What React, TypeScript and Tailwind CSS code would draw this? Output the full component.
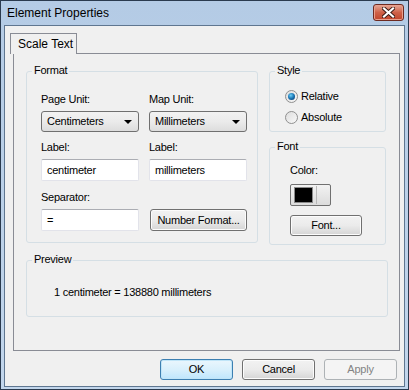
import React from 'react';

const font = "font-['Liberation_Sans',Arial,sans-serif]";

const Group = ({ title, className, children }: { title: string; className: string; children?: React.ReactNode }) => (
  <div className={`relative rounded-[3px] border border-[#d5dfe5] ${className}`}>
    <span className="absolute -top-[8px] left-[5px] bg-[#f0f0f0] px-[2px] leading-[13px]">{title}</span>
    {children}
  </div>
);

const Select = ({ value }: { value: string }) => (
  <div className="flex h-[21px] w-[98px] items-center justify-between rounded-[3px] border border-[#707070] bg-gradient-to-b from-[#f2f2f2] via-[#ebebeb] to-[#dddddd] pl-[5px] pr-[6px]">
    <span>{value}</span>
    <svg width="8" height="4" viewBox="0 0 8 4"><path d="M0 0h8L4 4z" fill="#000" /></svg>
  </div>
);

const TextBox = ({ value }: { value: string }) => (
  <div className="flex h-[22px] w-[98px] items-center rounded-[2px] border border-[#e2e3ea] border-t-[#abadb3] bg-white pl-[5px]">
    {value}
  </div>
);

const Button = ({ label, className = '', variant = 'normal' }: { label: string; className?: string; variant?: 'normal' | 'default' | 'disabled' }) => {
  const look =
    variant === 'default'
      ? 'border-[#3c7fb1] bg-gradient-to-b from-[#eaf6fd] via-[#d9f0fc] to-[#bee6fd] shadow-[inset_0_0_0_1px_#c0e5f8]'
      : variant === 'disabled'
      ? 'border-[#adb2b5] bg-[#f4f4f4] text-[#838383]'
      : 'border-[#707070] bg-gradient-to-b from-[#f2f2f2] via-[#ebebeb] to-[#d5d5d5] shadow-[inset_0_0_0_1px_#fcfcfc]';
  return (
    <div className={`flex items-center justify-center rounded-[3px] border ${look} ${className}`}>{label}</div>
  );
};

const Radio = ({ label, checked }: { label: string; checked?: boolean }) => (
  <div className="flex items-center gap-[3px]">
    <svg width="13" height="13" viewBox="0 0 13 13">
      <defs>
        <radialGradient id="rg" cx="0.4" cy="0.35" r="0.7">
          <stop offset="0" stopColor="#6ccff8" />
          <stop offset="0.6" stopColor="#1c78b6" />
          <stop offset="1" stopColor="#0d4a84" />
        </radialGradient>
        <linearGradient id="rb" x1="0" y1="0" x2="1" y2="1">
          <stop offset="0" stopColor="#dcdcdc" />
          <stop offset="1" stopColor="#fafafa" />
        </linearGradient>
      </defs>
      <circle cx="6.5" cy="6.5" r="6" fill="url(#rb)" stroke="#8f8f8f" />
      {checked && <circle cx="6.5" cy="6.5" r="3.5" fill="url(#rg)" />}
    </svg>
    <span>{label}</span>
  </div>
);

export default function App() {
  return (
    <div className={`h-[390px] w-[409px] overflow-hidden ${font} text-[11px] leading-[13px] tracking-[-0.25px] text-black`}>
      <div className="flex h-full w-full flex-col border border-[#2a3a4e] bg-gradient-to-b from-[#b4cbe5] to-[#c2d6ec] px-[3px] pb-[2px]">
        {/* title bar */}
        <div className="flex h-[24px] shrink-0 items-center justify-between pl-[3px] pr-[1px]">
          <span className="text-[12px] tracking-normal">Element Properties</span>
          <div className="mb-[2px] flex h-[17px] w-[31px] items-center justify-center rounded-[3px] border border-[#6d2a21] bg-gradient-to-b from-[#e4a797] via-[#cf6148] to-[#c0442b] shadow-[inset_0_0_0_1px_#e8a08e]">
            <svg width="13" height="11" viewBox="0 0 13 11">
              <path d="M2 1.5l9 8M11 1.5l-9 8" stroke="#3b1a14" strokeWidth="4" strokeLinecap="square" />
              <path d="M2 1.5l9 8M11 1.5l-9 8" stroke="#fff" strokeWidth="2.2" strokeLinecap="square" />
            </svg>
          </div>
        </div>

        {/* client */}
        <div className="flex flex-1 flex-col border border-[#5f7690] bg-[#f0f0f0] px-[4px] pt-[7px]">
          {/* tab strip */}
          <div className="flex pl-[1px]">
            <div className="relative z-10 -mb-[1px] flex h-[21px] w-[67px] items-center border border-b-0 border-[#898c95] bg-[#f0f0f0] pl-[7px] text-[12px] tracking-normal">
              Scale Text
            </div>
          </div>
          <div className="ml-[4px] flex h-[298px] w-[387px] flex-col border border-[#898c95] px-[12px] pt-[17px]">
            <div className="flex gap-[11px]">
              <Group title="Format" className="h-[172px] w-[232px] px-[14px] pt-[21px]">
                <div className="flex gap-[10px]">
                  <div className="flex flex-col">
                    <span>Page Unit:</span>
                    <div className="mt-[5px]"><Select value="Centimeters" /></div>
                    <span className="mt-[9px]">Label:</span>
                    <div className="mt-[5px]"><TextBox value="centimeter" /></div>
                    <span className="mt-[10px]">Separator:</span>
                    <div className="mt-[5px]"><TextBox value="=" /></div>
                  </div>
                  <div className="flex flex-col">
                    <span>Map Unit:</span>
                    <div className="mt-[5px]"><Select value="Millimeters" /></div>
                    <span className="mt-[9px]">Label:</span>
                    <div className="mt-[5px]"><TextBox value="millimeters" /></div>
                    <div className="mt-[28px] pl-[1px]">
                      <Button label="Number Format..." className="h-[22px] w-[97px]" />
                    </div>
                  </div>
                </div>
              </Group>
              <div className="flex flex-col">
                <Group title="Style" className="h-[61px] w-[117px] pl-[15px] pt-[18px]">
                  <div className="flex flex-col gap-[8px]">
                    <Radio label="Relative" checked />
                    <Radio label="Absolute" />
                  </div>
                </Group>
                <Group title="Font" className="mt-[15px] h-[98px] w-[117px] pl-[20px] pt-[16px]">
                  <span>Color:</span>
                  <div className="mt-[7px] flex h-[22px] w-[41px] items-center rounded-[2px] border border-[#707070] bg-gradient-to-b from-[#f2f2f2] to-[#dcdcdc] pl-[3px]">
                    <div className="h-[16px] w-[19px] border border-[#8a8a8a] bg-black" />
                    <div className="ml-[3px] h-[18px] w-px bg-[#b8b8b8]" />
                  </div>
                  <Button label="Font..." className="mt-[9px] h-[21px] w-[72px]" />
                </Group>
              </div>
            </div>
            <Group title="Preview" className="mt-[15px] h-[57px] w-[362px] pl-[27px] pt-[25px]">
              <span>1 centimeter = 138880 millimeters</span>
            </Group>
          </div>

          {/* buttons */}
          <div className="mt-[8px] flex justify-end gap-[9px] pr-[3px]">
            <Button label="OK" variant="default" className="h-[21px] w-[73px]" />
            <Button label="Cancel" className="h-[21px] w-[73px]" />
            <Button label="Apply" variant="disabled" className="h-[21px] w-[73px]" />
          </div>
        </div>
      </div>
    </div>
  );
}
